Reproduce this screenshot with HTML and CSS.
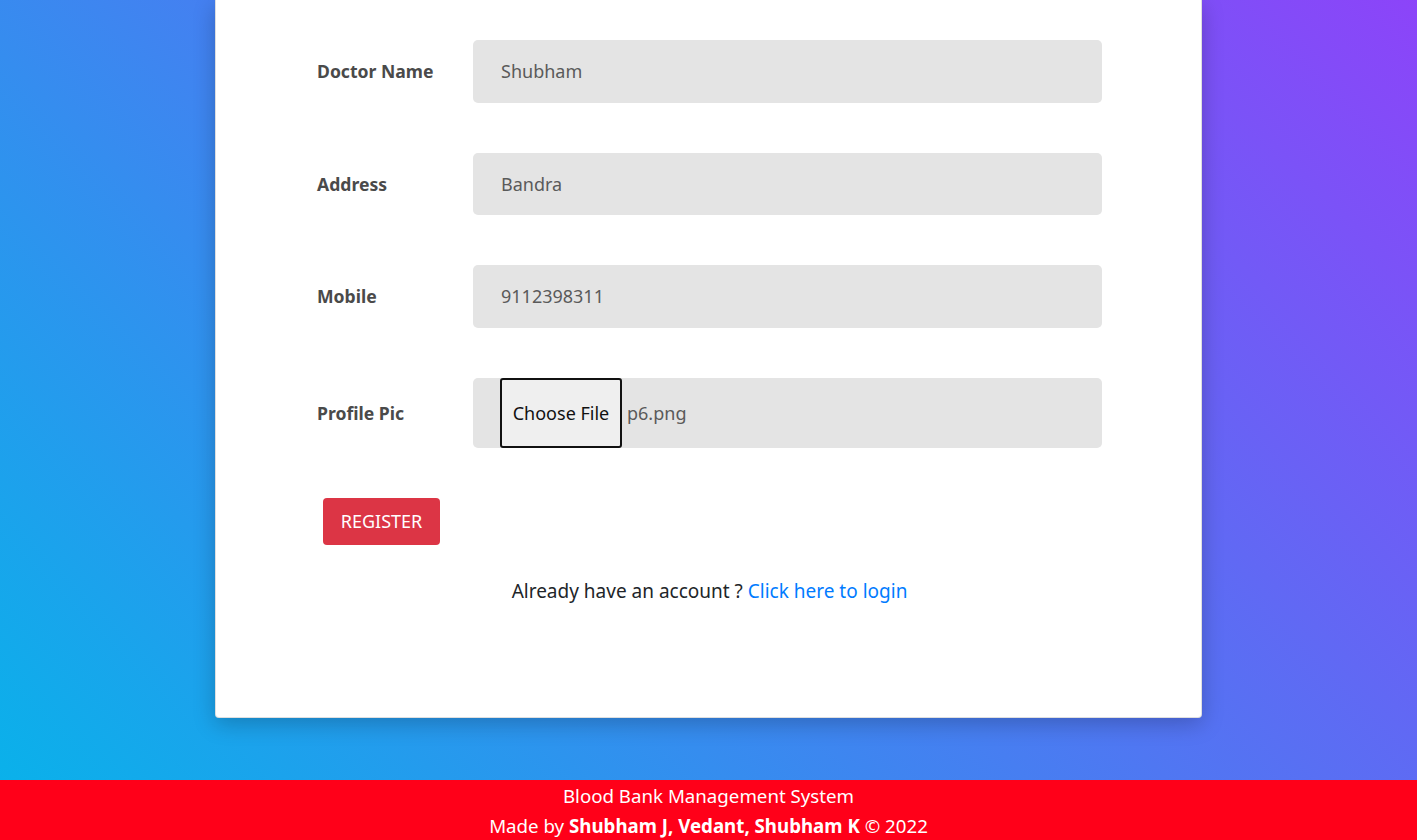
FILE: index.html
```html
<!DOCTYPE html>
<html lang="en">
<head>
<meta charset="utf-8">
<title>Doctor Registration</title>
<link rel="stylesheet" href="styles.css">
</head>
<body>
<main class="stage">
  <section class="card">
    <form class="form">
      <div class="row">
        <label class="label">Doctor Name</label>
        <div class="field"><span class="value">Shubham</span></div>
      </div>
      <div class="row">
        <label class="label">Address</label>
        <div class="field"><span class="value">Bandra</span></div>
      </div>
      <div class="row">
        <label class="label">Mobile</label>
        <div class="field"><span class="value">9112398311</span></div>
      </div>
      <div class="row">
        <label class="label">Profile Pic</label>
        <div class="field file-field">
          <span class="file-btn">Choose File</span>
          <span class="file-name">p6.png</span>
        </div>
      </div>
      <div class="actions">
        <button type="button" class="btn-register">REGISTER</button>
      </div>
      <p class="login-line">Already have an account ? <a href="#" class="login-link">Click here to login</a></p>
    </form>
  </section>
</main>
<footer class="footer">
  <div class="footer-line">Blood Bank Management System</div>
  <div class="footer-line">Made by <b>Shubham J, Vedant, Shubham K</b> © 2022</div>
</footer>
</body>
</html>
```

FILE: styles.css
```css
* { box-sizing: border-box; }
html, body { margin: 0; padding: 0; }
body {
  font-family: "Noto Sans", "Open Sans", sans-serif;
  color: #212529;
  width: 1417px;
  height: 840px;
  overflow: hidden;
}
.stage {
  height: 780px;
  background: linear-gradient(45deg, #0ab1ea 0%, #8c44f9 100%);
}
.card {
  width: 987px;
  height: 718px;
  margin: 0 auto;
  background: #fff;
  border: 1px solid rgba(0,0,0,0.125);
  border-top: none;
  border-radius: 0 0 4px 4px;
  box-shadow: 0 6px 22px rgba(0,0,0,0.22);
  padding: 40px 99px 0 101px;
}
.form { display: flex; flex-direction: column; }
.row {
  display: flex;
  align-items: center;
  margin-bottom: 50px;
}
.label {
  width: 156px;
  font-weight: 700;
  font-size: 17.6px;
  color: #4a4a4a;
}
.field {
  flex: 1;
  height: 62.5px;
  background: #e4e4e4;
  border-radius: 5px;
  display: flex;
  align-items: center;
  padding-left: 28px;
  font-size: 18px;
  color: #5a5a5a;
}
.file-field { height: 70px; padding-left: 27px; }
.file-btn {
  height: 70px;
  width: 122px;
  border: 2px solid #111;
  border-radius: 3px;
  background: #efefef;
  color: #111;
  display: flex;
  align-items: center;
  justify-content: center;
  font-size: 18px;
}
.file-name { margin-left: 5px; }
.actions { padding-left: 6px; }
.btn-register {
  font-family: inherit;
  width: 117px;
  height: 47px;
  border: none;
  border-radius: 4px;
  background: #dc3545;
  color: #fff;
  font-size: 18px;
  cursor: pointer;
}
.login-line {
  margin: 33px 0 0;
  text-align: center;
  font-size: 19px;
  color: #212529;
}
.login-link { color: #007bff; text-decoration: none; }
.footer {
  height: 60px;
  background: #ff0019;
  color: #fff;
  text-align: center;
  font-size: 18.7px;
  line-height: 30px;
  padding-top: 1px;
}
.footer-line { height: 30px; }
```
